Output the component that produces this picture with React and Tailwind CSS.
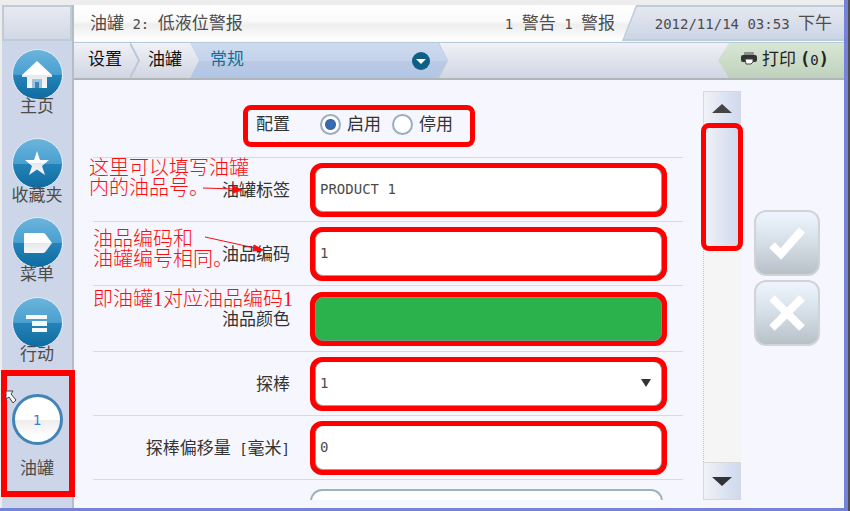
import { useState } from 'react';

const FIELDS = [
  { id: 'label', label: '油罐标签', kind: 'text', value: 'PRODUCT 1' },
  { id: 'code', label: '油品编码', kind: 'text', value: '1' },
  { id: 'color', label: '油品颜色', kind: 'color' },
  { id: 'probe', label: '探棒', kind: 'select', value: '1' },
  { id: 'offset', label: '探棒偏移量 [毫米]', kind: 'text', value: '0' },
];

// Latin runs are set smaller so that they are half as wide as a Chinese character
function Mixed({ text }) {
  return (
    <span className="whitespace-pre">
      {text.split(/([\x20-\x7e]+)/).map((part, i) =>
        i % 2 ? <span key={i} className="text-sm">{part}</span> : part
      )}
    </span>
  );
}

function HomeIcon() {
  return (
    <svg viewBox="0 0 32 32" className="w-8 h-8" fill="url(#glyph)">
      <path d="M16 2 L1 16 V18 H6 V29 H26 V18 H31 V16 Z" />
      <path d="M11 20 H21 V29 H18 V24 H14 V29 H11 Z" fill="#9fc3dc" />
      <path d="M14 23 H18 V29 H14 Z" fill="#3a86b4" />
    </svg>
  );
}

function StarIcon() {
  return (
    <svg viewBox="0 0 32 32" className="w-8 h-8" fill="url(#glyph)">
      <path d="M16 3 L19 12 H28 L21 18 L24 27 L16 21.500 L8 27 L11 18 L4 12 H13 Z" />
    </svg>
  );
}

function TagIcon() {
  return (
    <svg viewBox="0 0 32 32" className="w-8 h-8" fill="url(#glyph)">
      <path d="M4 6 H22 Q24 6 25 8 L31 16 L25 24 Q24 26 22 26 H4 Q3 26 3 25 V7 Q3 6 4 6 Z" />
    </svg>
  );
}

function ListIcon() {
  return (
    <svg viewBox="0 0 32 32" className="w-8 h-8" fill="#f7f8fa">
      <path d="M5 8 H26 V12 H5 Z M11 14 H26 V19 H11 Z M11 21 H26 V25 H11 Z" />
    </svg>
  );
}

function PrinterIcon() {
  return (
    <svg viewBox="0 0 16 13" className="w-4 h-[13px]">
      <path d="M3 1 Q3 0 4 0 H12 Q13 0 13 1 V3 H3 Z" fill="#8b8f8c" />
      <rect y="3" width="16" height="7" rx="2" fill="#333" />
      <path d="M4 7 H12 V10 L10 12 H5 Z" fill="#fff" stroke="#444" />
    </svg>
  );
}

function Chevron() {
  return (
    <svg viewBox="0 0 10 36" className="w-[10px] h-full" preserveAspectRatio="none" fill="none">
      <path d="M0 0 L9 18 L0 36" stroke="#b9c9d6" strokeWidth="2" />
    </svg>
  );
}

function NavItem({ label, className, children }) {
  return (
    <button className={`flex flex-col items-center w-full ${className}`}>
      <span className="flex items-center justify-center w-[51px] h-[51px] rounded-full border border-[#e3edf6] bg-[linear-gradient(#6bb5dc_0%,#4a9fd0_50%,#2383b8_52%,#0f6ba0_100%)]">
        {children}
      </span>
      <span className="-mt-1 h-5 leading-5 text-[#4c4c4c]">{label}</span>
    </button>
  );
}

function Sidebar() {
  return (
    <nav className="flex flex-col w-[72px] shrink-0 bg-[#ccd6e8] border-r-2 border-[#b5bcc6]">
      <div className="h-9 shrink-0 mb-2 border-2 border-[#bdccd5] bg-gradient-to-b from-[#e8eaf1] to-[#d2d8e6]" />
      <NavItem label="主页" className=""><HomeIcon /></NavItem>
      <NavItem label="收藏夹" className="mt-[22px]"><StarIcon /></NavItem>
      <NavItem label="菜单" className="mt-3"><TagIcon /></NavItem>
      <NavItem label="行动" className="mt-[13px]"><ListIcon /></NavItem>
      <div className="relative mt-[6px] -mr-[2px] h-[127px] shrink-0">
        <button className="flex flex-col items-center w-[70px] pt-6">
          <span className="flex items-center justify-center w-[51px] h-[51px] rounded-full border-[3px] border-[#4284b8] bg-[linear-gradient(#fff_0%,#fff_50%,#eeeeee_52%,#fff_90%)] text-sm text-[#3b7fd0]">
            1
          </span>
          <span className="mt-[13px] h-5 leading-5 text-[#4c4c4c]">油罐</span>
        </button>
        <div className="absolute -inset-x-px inset-y-0 border-[6px] border-[#fe0000] pointer-events-none" />
        <svg viewBox="0 0 12 15" className="absolute left-[3px] top-5 w-3 h-[15px]">
          <path d="M1 1 H8 L6 4 L11 10 L8 13 L4 7 L1 9 Z" fill="#fff" stroke="#444" />
        </svg>
      </div>
    </nav>
  );
}

function StatusBar() {
  return (
    <header className="flex h-9 shrink-0 text-[#4c4c4c] bg-[linear-gradient(#fff_0%,#fafafa_45%,#eeeeee_55%,#fff_100%)]">
      <div className="flex-1 flex items-center justify-between pl-4 pr-[7px]">
        <Mixed text="油罐 2: 低液位警报" />
        <Mixed text="1 警告 1 警报" />
      </div>
      <div className="w-[222px] pl-[2px] py-[2px] bg-[#bccdd9] [clip-path:polygon(14px_0,100%_0,100%_100%,0_100%)]">
        <div className="flex items-center justify-end h-full pr-3 bg-gradient-to-b from-[#e6e8f0] to-[#ccd5e6] [clip-path:polygon(13px_0,100%_0,100%_100%,0_100%)]">
          <Mixed text="2012/11/14 03:53 下午" />
        </div>
      </div>
    </header>
  );
}

function Breadcrumb() {
  return (
    <div className="flex h-[38px] mt-px shrink-0 border-t border-b-2 border-t-[#b8cbd8] border-b-[#b0b5b8] bg-gradient-to-b from-[#f1f1f7] to-[#d0d6e2]">
      <a href="#settings" className="flex items-center w-[56px] pl-[14px] pb-1 shrink-0 text-[#111]">设置</a>
      <Chevron />
      <a href="#tank" className="flex items-center w-[50px] pl-2 pb-1 shrink-0 text-[#111]">油罐</a>
      <button className="flex items-center justify-between w-[258px] shrink-0 pl-5 pr-[18px] text-[#176f97] bg-[linear-gradient(#cfdaee_0%,#c3d3ec_50%,#bccae2_52%,#b0c6e8_100%)] [clip-path:polygon(0_0,248px_0,100%_50%,248px_100%,0_100%,9px_50%)]">
        <span className="pb-1">常规</span>
        <svg viewBox="0 0 18 18" className="w-[18px] h-[18px]">
          <circle cx="9" cy="9" r="9" fill="#0d5f86" />
          <path d="M4 7 H14 L9 12 Z" fill="#fff" />
        </svg>
      </button>
      <div className="-ml-[10px]"><Chevron /></div>
      <button className="ml-auto flex items-center gap-[5px] w-[126px] pl-[23px] pb-1 text-[#222] bg-gradient-to-b from-[#d8e7d5] to-[#bfd1bd] [clip-path:polygon(11px_0,100%_0,100%_100%,11px_100%,0_50%)]">
        <PrinterIcon />
        <span className="whitespace-pre">打印<b className="pl-1">(</b><span className="text-sm">0</span><b>)</b></span>
      </button>
    </div>
  );
}

function Control({ field }) {
  const base = 'block w-full h-11 rounded-lg border border-t-0 border-[#8ea3b0] bg-white px-1 text-sm text-[#4c4c4c] outline-none';
  if (field.kind === 'color') {
    return <button type="button" id={field.id} className="block w-full h-11 rounded-lg border border-[#6f9a80] bg-[#2bb24c]" />;
  }
  if (field.kind === 'select') {
    return (
      <div className="relative">
        <select id={field.id} defaultValue={field.value} className={`${base} appearance-none`}>
          <option>1</option>
          <option>2</option>
        </select>
        <svg viewBox="0 0 10 8" className="absolute right-[11px] top-[17px] w-[10px] h-2 pointer-events-none">
          <path d="M0 0 H10 L5 8 Z" fill="#333" />
        </svg>
      </div>
    );
  }
  return <input id={field.id} type="text" defaultValue={field.value} className={base} />;
}

function Radio({ label, checked, onChange }) {
  return (
    <label className="flex items-center gap-[6px]">
      <input
        type="radio"
        name="config"
        checked={checked}
        onChange={onChange}
        className="appearance-none w-[21px] h-[21px] rounded-full border-2 border-[#9bacc0] bg-white checked:bg-[radial-gradient(circle,#356fba_0,#3467ad_5px,#fff_6px)]"
      />
      {label}
    </label>
  );
}

function Notes() {
  return (
    <div className="absolute inset-0 pointer-events-none text-xl leading-5 text-[#fb0d0d] font-light font-['Liberation_Serif','Noto_Sans_CJK_SC',serif] whitespace-nowrap">
      <p className="absolute -left-1 top-[67px]">这里可以填写油罐<br />内的油品号。</p>
      <p className="absolute left-0 top-[138px]">油品编码和<br />油罐编号相同。</p>
      <p className="absolute left-0 top-[198px]">即油罐1对应油品编码1</p>
      <svg viewBox="0 0 70 80" className="absolute left-[108px] top-[90px] w-[70px] h-20" fill="#fb0d0d" stroke="#fb0d0d">
        <path d="M2 7 L34 8" />
        <path d="M32 5 L41 9 L32 12 Z" />
        <path d="M4 56 L54 67" />
        <path d="M53 64 L62 69 L52 70 Z" />
      </svg>
    </div>
  );
}

function TankForm() {
  const [enabled, setEnabled] = useState(true);
  return (
    <form className="h-full overflow-hidden text-[#333]">
      <div className="relative flex items-center gap-5 h-[67px] border-b border-[#d3daea]">
        <span className="w-[197px] shrink-0 text-right">配置</span>
        <div className="flex gap-[11px] pl-[10px]">
          <Radio label="启用" checked={enabled} onChange={() => setEnabled(true)} />
          <Radio label="停用" checked={!enabled} onChange={() => setEnabled(false)} />
        </div>
        <div className="absolute left-[150px] top-[14px] w-[232px] h-[42px] rounded-lg border-[5px] border-[#fe0000] pointer-events-none" />
      </div>
      {FIELDS.map(f => (
        <div key={f.id}
          className={`flex items-center gap-5 border-b border-[#d3daea] ${f.kind === 'color' ? 'h-[66px]' : 'h-16'}`}>
          <label htmlFor={f.id} className="w-[197px] shrink-0 text-right">
            <Mixed text={f.label} />
          </label>
          <div className="flex-1 mr-4 rounded-xl border-[5px] border-[#fe0000] bg-[#fe0000]">
            <Control field={f} />
          </div>
        </div>
      ))}
      <div className="pl-[217px] pr-5 pt-[9px]">
        <input type="text" aria-label="油罐" className="block w-full h-11 rounded-xl border-2 border-[#9fb0bf] bg-white" />
      </div>
    </form>
  );
}

function ScrollBar() {
  const face = 'bg-gradient-to-r from-[#f1f2f6] to-[#cfd8ee] border border-[#d6d8dc]';
  return (
    <div className="flex flex-col w-[38px] ml-5 bg-[#f5f5f5] border-l border-dotted border-[#c4c4c4]">
      <button className={`flex items-center justify-center h-[35px] shrink-0 -ml-px ${face}`}>
        <svg viewBox="0 0 20 9" className="w-5 h-[9px]"><path d="M0 9 L10 0 L20 9 Z" fill="#444" /></svg>
      </button>
      <div className={`relative h-[123px] shrink-0 -ml-px ${face}`}>
        <div className="absolute -inset-x-[3px] -top-1 -bottom-[3px] rounded-lg border-[5px] border-[#fe0000]" />
      </div>
      <button className={`flex items-center justify-center h-[38px] shrink-0 mt-auto -ml-px ${face}`}>
        <svg viewBox="0 0 20 9" className="w-5 h-[9px]"><path d="M0 0 H20 L10 9 Z" fill="#333" /></svg>
      </button>
    </div>
  );
}

function ActionButton({ name, d }) {
  return (
    <button aria-label={name} className="flex items-center justify-center w-[66px] h-[66px] rounded-xl border-2 border-[#d0d3d8] bg-gradient-to-b from-[#eef5fe] via-[#d5dee6] to-[#b8c1c8]">
      <svg viewBox="0 0 40 40" className="w-10 h-10" fill="none" stroke="#fff" strokeWidth="8">
        <path d={d} />
      </svg>
    </button>
  );
}

export default function App() {
  return (
    <div className="h-screen border-r-2 border-[#4d4d52] overflow-hidden text-[17px] leading-6 font-['DejaVu_Sans_Mono','Noto_Sans_CJK_SC',monospace]">
      <svg width="0" height="0" className="absolute">
        <linearGradient id="glyph" x1="0" y1="0" x2="0" y2="1">
          <stop offset="0.500" stopColor="#fff" />
          <stop offset="0.520" stopColor="#e6e8ec" />
          <stop offset="1" stopColor="#f8f8fa" />
        </linearGradient>
      </svg>
      <div className="flex flex-col h-full border-r-4 border-b-[3px] border-[#7483d8] bg-[#f5f6fe]">
        <div className="h-[5px] shrink-0 bg-[#ededed]" />
        <div className="flex flex-1 min-h-0 border-l-2 border-[#ededed]">
          <Sidebar />
          <div className="flex-1 min-w-0 flex flex-col">
            <StatusBar />
            <Breadcrumb />
            <main className="flex flex-1 min-h-0 pl-[19px] pr-6 pt-[11px] pb-2">
              <div className="relative flex-1">
                <TankForm />
                <Notes />
              </div>
              <ScrollBar />
              <div className="flex flex-col gap-1 ml-[13px] pt-[119px]">
                <ActionButton name="确定" d="M5 22 L14 31 L35 7" />
                <ActionButton name="取消" d="M5 5 L35 35 M35 5 L5 35" />
              </div>
            </main>
          </div>
        </div>
      </div>
    </div>
  );
}
